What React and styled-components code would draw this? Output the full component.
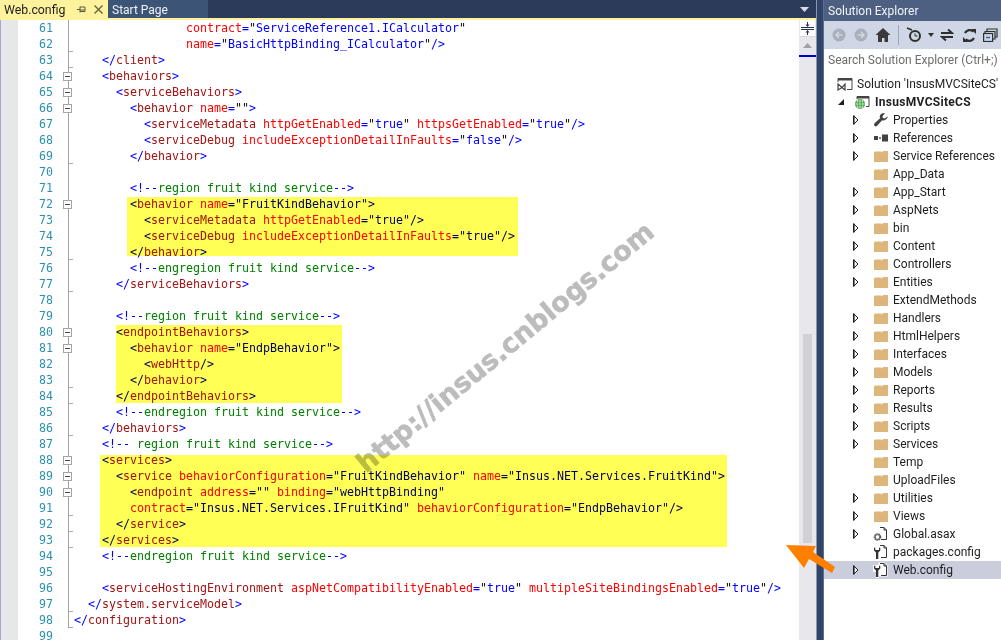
import styled, { createGlobalStyle } from "styled-components";

const GlobalStyle = createGlobalStyle`
  html, body {
    margin: 0;
    padding: 0;
    background: #fff;
  }
`;

const Page = styled.div`
  position: relative;
  display: flex;
  width: 1001px;
  height: 640px;
  overflow: hidden;
  font-family: Roboto, "Noto Sans", sans-serif;
`;

const EditorPane = styled.div`
  display: flex;
  flex-direction: column;
  width: 816px;
  height: 640px;
  flex: none;
`;

const TabStrip = styled.div`
  display: flex;
  align-items: stretch;
  height: 18px;
  background: #2b3b59;
  border-bottom: 2px solid #fff29d;
  flex: none;
`;

const Tab = styled.div`
  display: flex;
  align-items: center;
  width: ${({ $width }) => $width}px;
  padding-left: 4px;
  box-sizing: border-box;
  font-size: ${({ $active }) => ($active ? 12.3 : 12)}px;
  background: ${({ $active }) => ($active ? "#fff29d" : "#3c5476")};
  color: ${({ $active }) => ($active ? "#1e1e1e" : "#f0f2f6")};
`;

const TabLabel = styled.span`
  flex: 1;
  line-height: 18px;
  padding-top: 1px;
`;

const TabIcons = styled.span`
  display: flex;
  align-items: center;
  gap: 8px;
  margin-right: 5px;
`;

const TabMenu = styled.div`
  margin-left: auto;
  margin-right: 2px;
  display: flex;
  align-items: center;
  width: 14px;
`;

const EditorBody = styled.div`
  display: flex;
  flex: 1;
  min-height: 0;
`;

const CodeArea = styled.div`
  position: relative;
  flex: 1;
  overflow: hidden;
  border-left: 1px solid #a2a8d0;
  background: #fff;
`;

const CodeRow = styled.div`
  display: flex;
  height: 16px;
  line-height: 16px;
  font-family: "DejaVu Sans Mono", "Liberation Mono", monospace;
  font-size: 11.63px;
  white-space: pre;
`;

const Margin = styled.span`
  width: 17px;
  background: #e6e7e8;
  flex: none;
`;

const LineNumber = styled.span`
  width: 35px;
  margin-right: 10px;
  text-align: right;
  color: #2b91af;
  flex: none;
`;

const FoldCell = styled.span`
  position: relative;
  width: 11px;
  flex: none;
  ${({ $line }) =>
    $line &&
    `
    &::before {
      content: "";
      position: absolute;
      left: 5px;
      top: 0;
      bottom: 0;
      width: 1px;
      background: #a5a5a5;
    }
  `}
  ${({ $tick }) =>
    $tick &&
    `
    &::after {
      content: "";
      position: absolute;
      left: 5px;
      bottom: 0;
      width: 5px;
      height: 1px;
      background: #a5a5a5;
    }
  `}
`;

const FoldBox = styled.span`
  position: absolute;
  left: 0;
  top: 4px;
  width: 9px;
  height: 9px;
  box-sizing: border-box;
  border: 1px solid #a5a5a5;
  background: #fff;
  z-index: 1;
  &::after {
    content: "";
    position: absolute;
    left: 1px;
    top: 3px;
    width: 5px;
    height: 1px;
    background: #444;
  }
`;

const CodeText = styled.span`
  flex: 1;
`;

const Token = styled.span`
  color: ${({ $kind }) =>
    ({
      punct: "#0000ff",
      tag: "#a31515",
      attr: "#ff0000",
      quote: "#000000",
      value: "#0000ff",
      comment: "#008000",
    })[$kind]};
`;

const Watermark = styled.div`
  position: absolute;
  left: 504px;
  top: 327px;
  transform: translate(-50%, -50%) rotate(-39.5deg);
  font-family: "DejaVu Sans", "Liberation Sans", sans-serif;
  font-weight: 700;
  font-size: 27px;
  white-space: nowrap;
  color: #bcbcbc;
  -webkit-text-stroke: 0.6px #bcbcbc;
  text-shadow: 0 0 2px #fff;
`;

const Highlight = styled.div`
  position: absolute;
  left: ${({ $x }) => $x - 1}px;
  top: ${({ $y }) => $y - 20}px;
  width: ${({ $w }) => $w}px;
  height: ${({ $h }) => $h}px;
  background: #ffff55;
  mix-blend-mode: multiply;
`;

const Scrollbar = styled.div`
  display: flex;
  flex-direction: column;
  width: 17px;
  background: #e8e8ec;
  flex: none;
`;

const SplitButton = styled.div`
  display: flex;
  align-items: center;
  justify-content: center;
  height: 16px;
  margin: 0 1px;
  background: #fff;
  border-bottom: 1px solid #d8d8de;
`;

const ScrollArrow = styled.div`
  display: flex;
  justify-content: center;
  margin-top: 6px;
  height: 12px;
`;

const ScrollMark = styled.div`
  height: 2px;
  background: #0000c8;
`;

const ScrollThumb = styled.div`
  width: 9px;
  height: 209px;
  margin: 277px 0 0 4px;
  background: #d0d1d7;
`;

const Divider = styled.div`
  width: 8px;
  flex: none;
  background: #2f4468;
  border-left: 1px solid #8a96ad;
  border-right: 1px solid #5b6e90;
  box-sizing: border-box;
`;

const Explorer = styled.div`
  display: flex;
  flex-direction: column;
  flex: 1;
  min-width: 0;
  background: #fff;
`;

const ExplorerTitle = styled.div`
  height: 21px;
  padding: 1px 0 0 4px;
  box-sizing: border-box;
  background: #4d6082;
  color: #f2f4f8;
  font-size: 12px;
  line-height: 20px;
  flex: none;
`;

const Toolbar = styled.div`
  display: flex;
  align-items: center;
  height: 28px;
  padding-left: 8px;
  background: #cfd6e5;
  flex: none;
  overflow: hidden;
`;

const ToolSeparator = styled.span`
  width: 1px;
  height: 20px;
  margin: 0 7px 0 7px;
  background: #9fa6b5;
  flex: none;
`;

const ToolIcon = styled.svg`
  flex: none;
  margin-right: ${({ $gap }) => $gap ?? 0}px;
`;

const Search = styled.div`
  height: 21px;
  padding: 1px 0 0 4px;
  box-sizing: border-box;
  background: #fff;
  color: #6d6d6d;
  font-size: 12px;
  line-height: 20px;
  white-space: nowrap;
  overflow: hidden;
  flex: none;
`;

const Tree = styled.div`
  display: flex;
  flex-direction: column;
  padding-top: 5px;
`;

const TreeRow = styled.div`
  display: flex;
  align-items: center;
  height: 18px;
  padding-left: ${({ $indent }) => $indent}px;
  background: ${({ $selected }) => ($selected ? "#c9cddc" : "transparent")};
  font-size: 12px;
  color: #1e1e1e;
  white-space: nowrap;
  overflow: hidden;
`;

const Expander = styled.span`
  display: flex;
  align-items: center;
  justify-content: center;
  width: 8px;
  height: 18px;
  flex: none;
`;

const IconSlot = styled.span`
  display: flex;
  align-items: center;
  justify-content: center;
  width: 16px;
  height: 18px;
  margin: 0 ${({ $after }) => $after ?? 4}px 0 ${({ $before }) => $before ?? 12}px;
  flex: none;
`;

const RowLabel = styled.span`
  font-weight: ${({ $bold }) => ($bold ? 700 : 400)};
  letter-spacing: ${({ $bold }) => ($bold ? 0.3 : 0)}px;
  margin-bottom: 1px;
`;

const ArrowMark = styled.svg`
  position: absolute;
  left: 780px;
  top: 535px;
`;

const CODE = [
  [16, 'contract="ServiceReference1.ICalculator"'],
  [16, 'name="BasicHttpBinding_ICalculator"/>'],
  [4, "</client>"],
  [4, "<behaviors>"],
  [6, "<serviceBehaviors>"],
  [8, '<behavior name="">'],
  [10, '<serviceMetadata httpGetEnabled="true" httpsGetEnabled="true"/>'],
  [10, '<serviceDebug includeExceptionDetailInFaults="false"/>'],
  [8, "</behavior>"],
  [0, ""],
  [8, "<!--region fruit kind service-->"],
  [8, '<behavior name="FruitKindBehavior">'],
  [10, '<serviceMetadata httpGetEnabled="true"/>'],
  [10, '<serviceDebug includeExceptionDetailInFaults="true"/>'],
  [8, "</behavior>"],
  [8, "<!--engregion fruit kind service-->"],
  [6, "</serviceBehaviors>"],
  [0, ""],
  [6, "<!--region fruit kind service-->"],
  [6, "<endpointBehaviors>"],
  [8, '<behavior name="EndpBehavior">'],
  [10, "<webHttp/>"],
  [8, "</behavior>"],
  [6, "</endpointBehaviors>"],
  [6, "<!--endregion fruit kind service-->"],
  [4, "</behaviors>"],
  [4, "<!-- region fruit kind service-->"],
  [4, "<services>"],
  [6, '<service behaviorConfiguration="FruitKindBehavior" name="Insus.NET.Services.FruitKind">'],
  [8, '<endpoint address="" binding="webHttpBinding"'],
  [8, 'contract="Insus.NET.Services.IFruitKind" behaviorConfiguration="EndpBehavior"/>'],
  [6, "</service>"],
  [4, "</services>"],
  [4, "<!--endregion fruit kind service-->"],
  [0, ""],
  [4, '<serviceHostingEnvironment aspNetCompatibilityEnabled="true" multipleSiteBindingsEnabled="true"/>'],
  [2, "</system.serviceModel>"],
  [0, "</configuration>"],
  [0, ""],
];

const FOLD_BOXES = [64, 65, 66, 72, 80, 81, 88, 89, 90];
const FOLD_TICKS = [62, 63, 69, 75, 77, 83, 84, 86, 91, 92, 93, 97, 98];

const HIGHLIGHTS = [
  { x: 127, y: 197, w: 391, h: 59 },
  { x: 116, y: 325, w: 226, h: 78 },
  { x: 100, y: 455, w: 627, h: 92 },
];

const TOKEN_RE = /<\/?[\w.]+|\/?>|[\w.]+(?==)|=|"[^"]*"|\s+|[^\s]+/g;

const tokenize = (text) => {
  if (text.startsWith("<!--")) {
    return [
      ["punct", "<!--"],
      ["comment", text.slice(4, -3)],
      ["punct", "-->"],
    ];
  }
  const tokens = [];
  (text.match(TOKEN_RE) || []).forEach((part) => {
    if (part.startsWith("<")) {
      const bracket = part.startsWith("</") ? "</" : "<";
      tokens.push(["punct", bracket]);
      tokens.push(["tag", part.slice(bracket.length)]);
    } else if (part === ">" || part === "/>" || part === "=") {
      tokens.push(["punct", part]);
    } else if (part.startsWith('"')) {
      tokens.push(["quote", '"']);
      if (part.length > 2) tokens.push(["value", part.slice(1, -1)]);
      tokens.push(["quote", '"']);
    } else if (part.trim() === "") {
      tokens.push(["quote", part]);
    } else {
      tokens.push(["attr", part]);
    }
  });
  return tokens;
};

const TREE = [
  ["Properties", "wrench", true],
  ["References", "refs", true],
  ["Service References", "folder", true],
  ["App_Data", "folder", false],
  ["App_Start", "folder", true],
  ["AspNets", "folder", true],
  ["bin", "folder", true],
  ["Content", "folder", true],
  ["Controllers", "folder", true],
  ["Entities", "folder", true],
  ["ExtendMethods", "folder", false],
  ["Handlers", "folder", true],
  ["HtmlHelpers", "folder", true],
  ["Interfaces", "folder", true],
  ["Models", "folder", true],
  ["Reports", "folder", true],
  ["Results", "folder", true],
  ["Scripts", "folder", true],
  ["Services", "folder", true],
  ["Temp", "folder", false],
  ["UploadFiles", "folder", false],
  ["Utilities", "folder", true],
  ["Views", "folder", true],
  ["Global.asax", "gear", true],
  ["packages.config", "config", false],
  ["Web.config", "config", true, true],
];

const ExpandTriangle = () => (
  <svg width="6" height="10" viewBox="0 0 6 10">
    <path d="M.75.9 5 5 .75 9.1Z" fill="#fff" stroke="#1e1e1e" strokeWidth="1" />
    <path d="M.75.5v9" stroke="#1e1e1e" strokeWidth="1.4" />
  </svg>
);

const FolderIcon = () => (
  <svg width="14" height="12" viewBox="0 0 14 12">
    <path d="M0 2.5 1 1.5h6l1 1.5h-.5L9 1h5v11H0Z" fill="#dcb67a" />
  </svg>
);

const WrenchIcon = () => (
  <svg width="14" height="14" viewBox="0 0 14 14">
    <path d="M13.6 3.2 10.8 5.6 8.8 4.9 8.6 2.9 11 .6C9 0 7 .6 6.2 2.1c-.6 1.1-.5 2.3-.1 3.2L.6 10.3c-.7.7-.7 1.8 0 2.6.7.7 1.8.6 2.5-.1l5-5.5c1.2.4 2.6.2 3.7-.7 1.2-1 1.9-2.2 1.8-3.4Z" fill="#424242" />
  </svg>
);

const RefsIcon = () => (
  <svg width="16" height="10" viewBox="0 0 16 10">
    <rect x="1" y="3" width="4" height="4" fill="#424242" />
    <rect x="6" y="4" width="2" height="2" fill="#777" />
    <rect x="9" y="1.5" width="6" height="7" fill="#424242" />
  </svg>
);

const PageOutline = ({ halo }) => (
  <>
    {halo && <path d="M5.5.5h6l3 3v11h-9Z" fill="#fff" />}
    <path d="M7 1.5h4l2.5 2.5v9.500H8M11 1.500V4h2.500" fill="none" stroke="#333" strokeWidth="1" />
  </>
);

const GearIcon = () => (
  <svg width="16" height="16" viewBox="0 0 16 16">
    <PageOutline />
    <circle cx="4.500" cy="11" r="3" fill="none" stroke="#555" strokeWidth="1.600" strokeDasharray="1.500 .6" />
    <circle cx="4.500" cy="11" r="2.300" fill="none" stroke="#666" strokeWidth="1" />
  </svg>
);

const ConfigIcon = ({ halo }) => (
  <svg width="16" height="16" viewBox="0 0 16 16">
    <PageOutline halo={halo} />
    {halo && <path d="M0 3h8v7H6v6H3v-6H0Z" fill="#fff" />}
    <path d="M1 4v2.500L3 8.500V15h2.300V8.500L7.300 6.500V4L6 3.600V6H2.300V3.600Z" fill="#333" />
  </svg>
);

const SolutionIcon = () => (
  <svg width="16" height="14" viewBox="0 0 16 14">
    <path d="M1 5V1.500h14v11h-5" fill="none" stroke="#444" strokeWidth="1" />
    <path d="M1 2h14v1.500H1Z" fill="#444" />
    <path d="M1 7l4 3.500L8 7v6l-3-2.500L1 13Z" fill="none" stroke="#444" strokeWidth="1.200" />
  </svg>
);

const ProjectIcon = () => (
  <svg width="16" height="14" viewBox="0 0 16 14">
    <path d="M3 4V1.500h12v10h-3" fill="none" stroke="#444" strokeWidth="1" />
    <path d="M3 2h12v1.500H3Z" fill="#444" />
    <circle cx="6" cy="9" r="5" fill="#3c9a3c" />
    <path d="M1 9h10M6 4v10M2.500 6h7M2.500 12h7M3.800 5c-1 2.500-1 5.500 0 8M8.200 5c1 2.500 1 5.500 0 8" stroke="#d8efd8" strokeWidth=".7" fill="none" />
  </svg>
);

const TREE_ICONS = {
  folder: FolderIcon,
  wrench: WrenchIcon,
  refs: RefsIcon,
  gear: GearIcon,
  config: ConfigIcon,
};

const NavCircle = ({ flip, gap }) => (
  <ToolIcon $gap={gap} width="14" height="14" viewBox="0 0 14 14">
    <circle cx="7" cy="7" r="6.500" fill="#a9afbb" />
    <path d={flip ? "M3.500 7h6M7 4l3 3-3 3" : "M10.500 7h-6M7 4 4 7l3 3"} stroke="#cfd6e5" strokeWidth="1.500" fill="none" />
  </ToolIcon>
);

const App = () => {
  return (
    <Page>
      <GlobalStyle />
      <EditorPane>
        <TabStrip>
          <Tab $active $width={108}>
            <TabLabel>Web.config</TabLabel>
            <TabIcons>
              <svg width="9" height="9" viewBox="0 0 9 9">
                <path d="M0 4.500h3M3 1.500v6M3 2h5v4.500H3M3 5h5" stroke="#5a5a40" strokeWidth="1" fill="none" />
              </svg>
              <svg width="9" height="9" viewBox="0 0 9 9">
                <path d="M.5.500l8 8M8.500.500l-8 8" stroke="#6e6b4a" strokeWidth="1.500" />
              </svg>
            </TabIcons>
          </Tab>
          <Tab $width={100}>
            <TabLabel>Start Page</TabLabel>
          </Tab>
          <TabMenu>
            <svg width="9" height="5" viewBox="0 0 9 5">
              <path d="M0 0h9L4.500 5Z" fill="#d8dde8" />
            </svg>
          </TabMenu>
        </TabStrip>
        <EditorBody>
          <CodeArea>
            {CODE.map(([indent, text], index) => {
              const lineNo = 61 + index;
              return (
                <CodeRow key={lineNo}>
                  <Margin />
                  <LineNumber>{lineNo}</LineNumber>
                  <FoldCell $line={lineNo < 99} $tick={FOLD_TICKS.includes(lineNo)}>
                    {FOLD_BOXES.includes(lineNo) && <FoldBox />}
                  </FoldCell>
                  <CodeText>
                    {" ".repeat(indent)}
                    {tokenize(text).map(([kind, value], i) => (
                      <Token key={i} $kind={kind}>
                        {value}
                      </Token>
                    ))}
                  </CodeText>
                </CodeRow>
              );
            })}
            <Watermark>http://insus.cnblogs.com</Watermark>
            {HIGHLIGHTS.map((h) => (
              <Highlight key={h.y} $x={h.x} $y={h.y} $w={h.w} $h={h.h} />
            ))}
          </CodeArea>
          <Scrollbar>
            <SplitButton>
              <svg width="13" height="13" viewBox="0 0 13 13">
                <path d="M0 5.500h13M0 7.500h13M6.500 0v3.500M6.500 9.500V13" stroke="#2a3550" strokeWidth="1" />
                <path d="M4.500 2.500h4l-2 2.500ZM4.500 10.500h4l-2-2.500Z" fill="#2a3550" />
              </svg>
            </SplitButton>
            <ScrollArrow>
              <svg width="9" height="5" viewBox="0 0 9 5">
                <path d="M4.500 0 9 5H0Z" fill="#a0a3ab" />
              </svg>
            </ScrollArrow>
            <ScrollMark />
            <ScrollThumb />
          </Scrollbar>
        </EditorBody>
      </EditorPane>
      <Divider />
      <Explorer>
        <ExplorerTitle>Solution Explorer</ExplorerTitle>
        <Toolbar>
          <NavCircle gap={8} />
          <NavCircle flip gap={7} />
          <ToolIcon width="16" height="16" viewBox="0 0 16 16">
            <path d="M8 1 .5 8H3v7h4v-4h2.500v4H13V8h2.500Z" fill="#3a3a3a" />
          </ToolIcon>
          <ToolSeparator />
          <ToolIcon $gap={4} width="18" height="16" viewBox="0 0 18 16">
            <path d="M1 1l5 2" stroke="#2f2f2f" strokeWidth="1.500" />
            <circle cx="9" cy="9" r="5" fill="none" stroke="#2f2f2f" strokeWidth="2" />
            <path d="M9 6.500V9h2.500" stroke="#2f2f2f" strokeWidth="1" fill="none" />
          </ToolIcon>
          <ToolIcon $gap={6} width="6" height="4" viewBox="0 0 6 4">
            <path d="M0 0h6L3 4Z" fill="#2f2f2f" />
          </ToolIcon>
          <ToolIcon $gap={8} width="14" height="14" viewBox="0 0 14 14">
            <path d="M1 5h9M8 1.500 12 5 8 5M13 9H4M6 12.500 2 9h4" stroke="#2f2f2f" strokeWidth="2" fill="none" />
          </ToolIcon>
          <ToolIcon $gap={6} width="15" height="15" viewBox="0 0 15 15">
            <path d="M11.500 3.500A5.500 5.500 0 0 0 3 5M3.500 11.500A5.500 5.500 0 0 0 12 10" stroke="#2f2f2f" strokeWidth="2.400" fill="none" />
            <path d="M9 1h5v5ZM6 14H1V9Z" fill="#2f2f2f" />
          </ToolIcon>
          <ToolIcon width="15" height="14" viewBox="0 0 15 14">
            <path d="M4 3V1h10v8h-2M2 5V3.500h10V11h-2" fill="none" stroke="#2f2f2f" strokeWidth="1.200" />
            <rect x=".6" y="5.500" width="9" height="8" fill="#cfd6e5" stroke="#2f2f2f" strokeWidth="1.200" />
            <path d="M3 9.500h4" stroke="#3f5fa8" strokeWidth="1.500" />
          </ToolIcon>
        </Toolbar>
        <Search>Search Solution Explorer (Ctrl+;)</Search>
        <Tree>
          <TreeRow $indent={13}>
            <IconSlot $before={0}>
              <SolutionIcon />
            </IconSlot>
            <RowLabel>Solution 'InsusMVCSiteCS' (1 project)</RowLabel>
          </TreeRow>
          <TreeRow $indent={13}>
            <svg width="8" height="8" viewBox="0 0 8 8">
              <path d="M7 1v6H1Z" fill="#1e1e1e" />
            </svg>
            <IconSlot $before={9} $after={5}>
              <ProjectIcon />
            </IconSlot>
            <RowLabel $bold>InsusMVCSiteCS</RowLabel>
          </TreeRow>
          {TREE.map(([label, icon, expandable, selected]) => {
            const Icon = TREE_ICONS[icon];
            return (
              <TreeRow key={label} $indent={28} $selected={selected}>
                <Expander>{expandable && <ExpandTriangle />}</Expander>
                <IconSlot $before={13}>
                  <Icon halo={selected} />
                </IconSlot>
                <RowLabel>{label}</RowLabel>
              </TreeRow>
            );
          })}
        </Tree>
      </Explorer>
      <ArrowMark width="60" height="45" viewBox="780 535 60 45">
        <path d="M786 545 816 546 813 552 835 567 832 573 809 559 804 568Z" fill="#ff8000" />
      </ArrowMark>
    </Page>
  );
};

export default App;
